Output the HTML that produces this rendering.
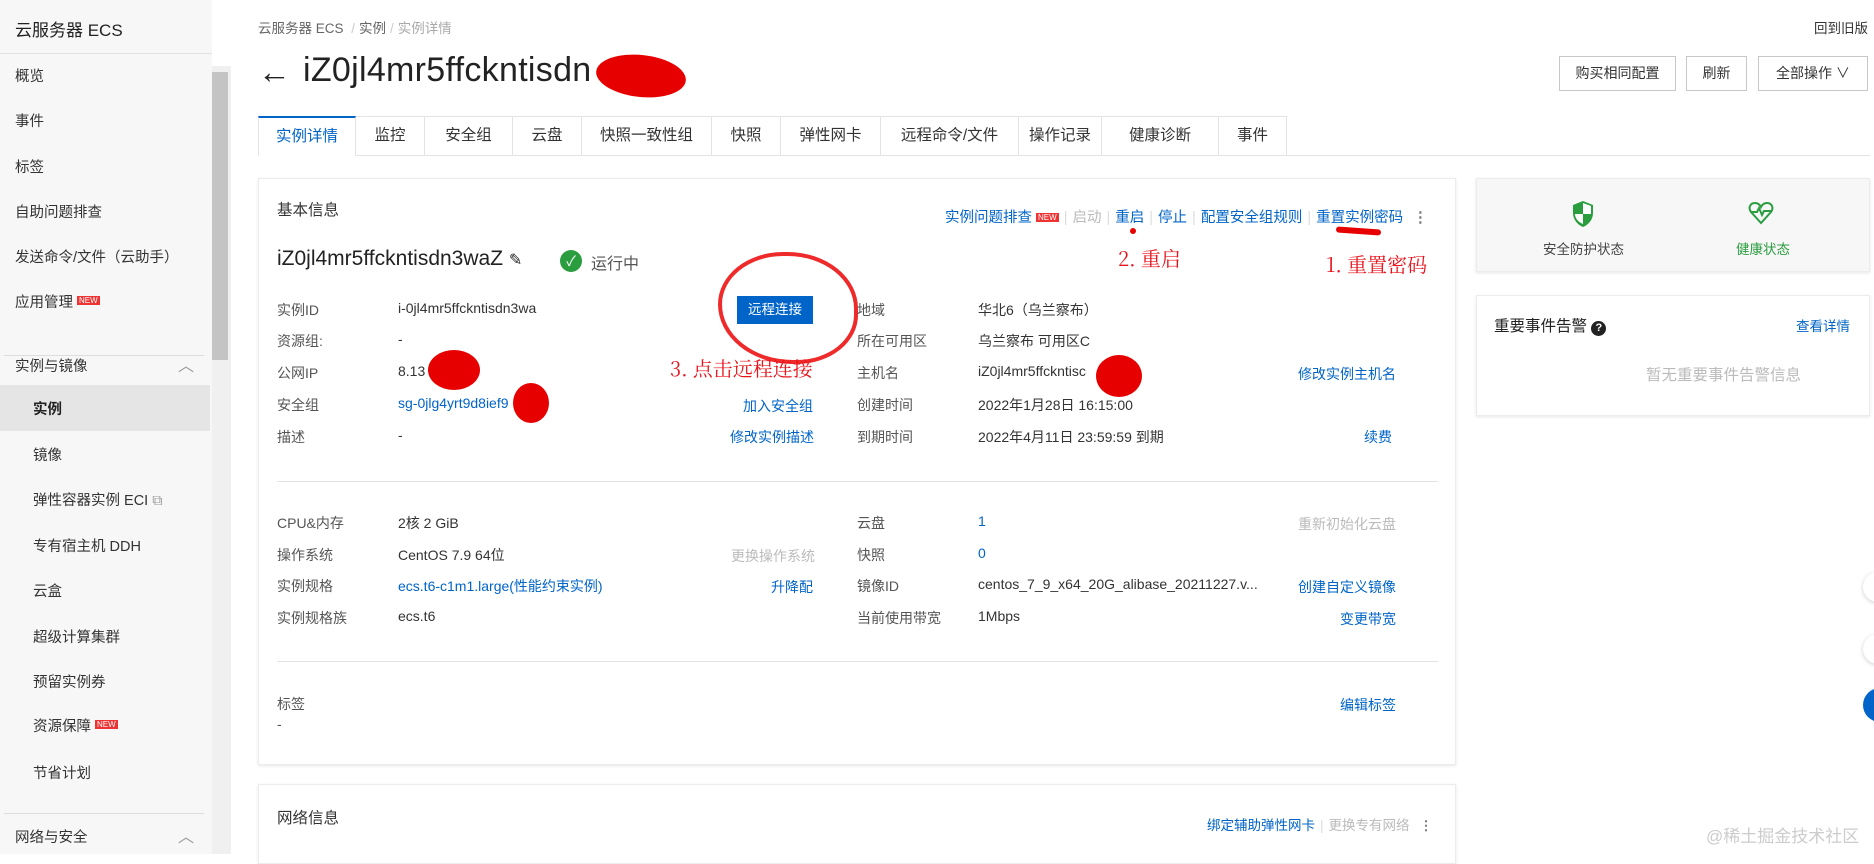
<!DOCTYPE html>
<html><head><meta charset="utf-8"><style>
*{margin:0;padding:0;box-sizing:border-box}
body{width:1874px;height:854px;overflow:hidden;background:#fff;font-family:"Liberation Sans","Noto Sans CJK SC",sans-serif;color:#333;font-size:14px;position:relative}
.a{position:absolute;white-space:nowrap}
.side{position:absolute;left:0;top:0;width:212px;height:854px;background:#f7f7f8}
.si{position:absolute;left:15px;font-size:14.5px;color:#333}
.blue{color:#0064c8}
.gray{color:#bbb}
.tab{position:absolute;top:116px;height:40px;border:1px solid #e3e3e3;border-left:none;font-size:15.5px;text-align:center;line-height:38px;background:#fff}
.card{position:absolute;background:#fff;border:1px solid #ececec;box-shadow:0 1px 3px rgba(0,0,0,.1)}
.lbl{position:absolute;left:277px;color:#555}
.red{color:#e8141c;font-family:"Noto Serif CJK SC","Liberation Serif",serif;font-size:20px}
.blob{position:absolute;background:#e60000;border-radius:50%}
.btn{position:absolute;top:56px;height:35px;border:1px solid #c8c8c8;font-size:14px;line-height:33px;text-align:center;background:#fff}
.sep{color:#ddd;margin:0 5px}
</style></head><body>
<div class="side"></div>
<div class="a" style="left:15px;top:16px;font-size:17px;color:#222">云服务器 ECS</div>
<div class="a" style="left:0;top:53px;width:212px;height:1px;background:#e2e2e2"></div>
<div class="a" style="left:212px;top:66px;width:19px;height:788px;background:#f0f0f0"></div>
<div class="a" style="left:212px;top:72px;width:16px;height:288px;background:#c4c4c4"></div>
<div class="si" style="top:65px">概览</div>
<div class="si" style="top:110px">事件</div>
<div class="si" style="top:156px">标签</div>
<div class="si" style="top:201px">自助问题排查</div>
<div class="si" style="top:246px">发送命令/文件（云助手）</div>
<div class="si" style="top:291px">应用管理 <span style="background:#e33;color:#fff;font-size:8px;padding:0 2px;vertical-align:4px">NEW</span></div>
<div class="a" style="left:4px;top:355px;width:200px;height:1px;background:#ddd"></div>
<div class="si" style="top:355px">实例与镜像</div><div class="a" style="left:178px;top:352px;font-size:16px;color:#999">︿</div>
<div class="a" style="left:0;top:385px;width:210px;height:46px;background:#e5e5e5"></div>
<div class="si" style="left:33px;top:398px;font-weight:bold;color:#222">实例</div>
<div class="si" style="left:33px;top:444px">镜像</div>
<div class="si" style="left:33px;top:489px">弹性容器实例 ECI <span style="color:#999">⧉</span></div>
<div class="si" style="left:33px;top:535px">专有宿主机 DDH</div>
<div class="si" style="left:33px;top:580px">云盒</div>
<div class="si" style="left:33px;top:626px">超级计算集群</div>
<div class="si" style="left:33px;top:671px">预留实例券</div>
<div class="si" style="left:33px;top:715px">资源保障 <span style="background:#e33;color:#fff;font-size:8px;padding:0 2px;vertical-align:4px">NEW</span></div>
<div class="si" style="left:33px;top:762px">节省计划</div>
<div class="a" style="left:4px;top:813px;width:200px;height:1px;background:#ddd"></div>
<div class="si" style="top:826px">网络与安全</div><div class="a" style="left:178px;top:823px;font-size:16px;color:#999">︿</div>

<div class="a" style="left:258px;top:17px;font-size:13.5px;color:#666">云服务器 ECS <span style="color:#ccc;margin:0 4px">/</span>实例<span style="color:#ccc;margin:0 4px">/</span><span style="color:#aaa">实例详情</span></div>
<div class="a" style="left:1814px;top:17px;font-size:13.5px;color:#333">回到旧版</div>
<div class="a" style="left:258px;top:53px;font-size:33px;color:#222">←</div>
<div class="a" style="left:303px;top:51px;font-size:34px;color:#222;letter-spacing:0.3px">iZ0jl4mr5ffckntisdn</div>
<div class="blob" style="left:596px;top:55px;width:90px;height:42px;transform:rotate(6deg)"></div>
<div class="btn" style="left:1559px;width:117px">购买相同配置</div>
<div class="btn" style="left:1686px;width:61px">刷新</div>
<div class="btn" style="left:1758px;width:110px">全部操作 ∨</div>

<div class="a" style="left:258px;top:155px;width:1612px;height:1px;background:#e3e3e3"></div>
<div class="tab" style="left:258px;width:98px;border-left:1px solid #e3e3e3;border-top:2px solid #0064c8;color:#0064c8;border-bottom-color:#fff">实例详情</div>
<div class="tab" style="left:356px;width:69px">监控</div>
<div class="tab" style="left:425px;width:88px">安全组</div>
<div class="tab" style="left:513px;width:69px">云盘</div>
<div class="tab" style="left:582px;width:130px">快照一致性组</div>
<div class="tab" style="left:712px;width:69px">快照</div>
<div class="tab" style="left:781px;width:100px">弹性网卡</div>
<div class="tab" style="left:881px;width:138px">远程命令/文件</div>
<div class="tab" style="left:1019px;width:83px">操作记录</div>
<div class="tab" style="left:1102px;width:117px">健康诊断</div>
<div class="tab" style="left:1219px;width:68px">事件</div>

<div class="card" style="left:258px;top:178px;width:1198px;height:587px"></div>
<div class="card" style="left:258px;top:784px;width:1198px;height:80px"></div>
<div class="card" style="left:1476px;top:178px;width:394px;height:94px;background:#f7f7f7"></div>
<div class="card" style="left:1476px;top:295px;width:394px;height:121px"></div>

<div class="a" style="left:277px;top:198px;font-size:15.5px;color:#333">基本信息</div>
<div class="a" style="left:945px;top:206px;font-size:14.5px"><span class="blue">实例问题排查</span> <span style="background:#e33;color:#fff;font-size:8px;padding:0 2px;vertical-align:2px">NEW</span><span class="sep">|</span><span class="gray">启动</span><span class="sep">|</span><span class="blue">重启</span><span class="sep">|</span><span class="blue">停止</span><span class="sep">|</span><span class="blue">配置安全组规则</span><span class="sep">|</span><span class="blue">重置实例密码</span> <span style="color:#777;font-weight:bold;margin-left:6px">⋮</span></div>
<div class="a" style="left:1336px;top:228px;width:45px;height:6px;background:#e60000;border-radius:3px;transform:rotate(4deg)"></div>
<div class="blob" style="left:1130px;top:228px;width:6px;height:6px"></div>
<div class="a red" style="left:1118px;top:243px">2. 重启</div>
<div class="a red" style="left:1326px;top:249px">1. 重置密码</div>

<div class="a" style="left:277px;top:247px;font-size:21px;color:#222">iZ0jl4mr5ffckntisdn3waZ <span style="font-size:16px">✎</span></div>
<div class="a" style="left:560px;top:250px;width:22px;height:22px;border-radius:50%;background:#2a9d3f;color:#fff;font-size:14px;text-align:center;line-height:22px">✓</div>
<div class="a" style="left:591px;top:250px;font-size:16px;color:#555">运行中</div>

<div class="a" style="left:718px;top:252px;width:140px;height:112px;border:4px solid #ee2a2a;border-radius:48% 52% 45% 55%"></div>
<div class="a" style="left:737px;top:296px;width:76px;height:28px;background:#0064c8;color:#fff;font-size:13.5px;line-height:28px;text-align:center">远程连接</div>
<div class="a red" style="left:670px;top:353px">3. 点击远程连接</div>

<div class="lbl a" style="top:300px">实例ID</div><div class="a" style="left:398px;top:300px">i-0jl4mr5ffckntisdn3wa</div>
<div class="lbl a" style="top:331px">资源组:</div><div class="a" style="left:398px;top:331px">-</div>
<div class="lbl a" style="top:363px">公网IP</div><div class="a" style="left:398px;top:363px">8.13</div>
<div class="blob" style="left:428px;top:350px;width:52px;height:40px"></div>
<div class="lbl a" style="top:395px">安全组</div><div class="a blue" style="left:398px;top:395px">sg-0jlg4yrt9d8ief9</div>
<div class="blob" style="left:513px;top:383px;width:36px;height:40px"></div>
<div class="a blue" style="left:743px;top:396px">加入安全组</div>
<div class="lbl a" style="top:427px">描述</div><div class="a" style="left:398px;top:427px">-</div>
<div class="a blue" style="left:730px;top:427px">修改实例描述</div>

<div class="a" style="left:857px;top:300px;color:#555">地域</div><div class="a" style="left:978px;top:300px">华北6（乌兰察布）</div>
<div class="a" style="left:857px;top:331px;color:#555">所在可用区</div><div class="a" style="left:978px;top:331px">乌兰察布 可用区C</div>
<div class="a" style="left:857px;top:363px;color:#555">主机名</div><div class="a" style="left:978px;top:363px">iZ0jl4mr5ffckntisc</div>
<div class="blob" style="left:1096px;top:355px;width:46px;height:42px"></div>
<div class="a blue" style="left:1298px;top:364px">修改实例主机名</div>
<div class="a" style="left:857px;top:395px;color:#555">创建时间</div><div class="a" style="left:978px;top:395px">2022年1月28日 16:15:00</div>
<div class="a" style="left:857px;top:427px;color:#555">到期时间</div><div class="a" style="left:978px;top:427px">2022年4月11日 23:59:59 到期</div>
<div class="a blue" style="left:1364px;top:427px">续费</div>

<div class="a" style="left:277px;top:481px;width:1161px;height:1px;background:#e3e3e3"></div>
<div class="lbl a" style="top:513px">CPU&amp;内存</div><div class="a" style="left:398px;top:513px">2核 2 GiB</div>
<div class="lbl a" style="top:545px">操作系统</div><div class="a" style="left:398px;top:545px">CentOS 7.9 64位</div><div class="a gray" style="left:731px;top:546px">更换操作系统</div>
<div class="lbl a" style="top:576px">实例规格</div><div class="a blue" style="left:398px;top:576px">ecs.t6-c1m1.large(性能约束实例)</div><div class="a blue" style="left:771px;top:577px">升降配</div>
<div class="lbl a" style="top:608px">实例规格族</div><div class="a" style="left:398px;top:608px">ecs.t6</div>
<div class="a" style="left:857px;top:513px;color:#555">云盘</div><div class="a blue" style="left:978px;top:513px">1</div><div class="a gray" style="left:1298px;top:514px">重新初始化云盘</div>
<div class="a" style="left:857px;top:545px;color:#555">快照</div><div class="a blue" style="left:978px;top:545px">0</div>
<div class="a" style="left:857px;top:576px;color:#555">镜像ID</div><div class="a" style="left:978px;top:576px">centos_7_9_x64_20G_alibase_20211227.v...</div><div class="a blue" style="left:1298px;top:577px">创建自定义镜像</div>
<div class="a" style="left:857px;top:608px;color:#555">当前使用带宽</div><div class="a" style="left:978px;top:608px">1Mbps</div><div class="a blue" style="left:1340px;top:609px">变更带宽</div>
<div class="a" style="left:277px;top:661px;width:1161px;height:1px;background:#e3e3e3"></div>
<div class="lbl a" style="top:694px">标签</div><div class="a blue" style="left:1340px;top:695px">编辑标签</div>
<div class="lbl a" style="top:716px">-</div>

<div class="a" style="left:277px;top:806px;font-size:15.5px">网络信息</div>
<div class="a" style="left:1207px;top:814px;font-size:13.5px"><span class="blue">绑定辅助弹性网卡</span><span class="sep">|</span><span class="gray">更换专有网络</span> <span style="color:#777;font-weight:bold;margin-left:6px">⋮</span></div>
<div class="a" style="left:1706px;top:822px;font-size:17px;color:#ccc">@稀土掘金技术社区</div>

<svg class="a" style="left:1571px;top:200px" width="24" height="28" viewBox="0 0 24 28"><path d="M12 1 L22 5 V13 C22 20 17 25 12 27 C7 25 2 20 2 13 V5 Z" fill="#2a9d3f"/><path d="M12 4 V14 H20 V6 L12 3 Z M12 14 V24 C7 22 4 18 4 14 Z" fill="#fff"/></svg>
<div class="a" style="left:1543px;top:238px;font-size:13.5px;color:#444">安全防护状态</div>
<svg class="a" style="left:1748px;top:200px" width="26" height="26" viewBox="0 0 26 26"><path d="M13 23 L3 12 C0 8 2 3 7 3 C10 3 12 5 13 7 C14 5 16 3 19 3 C24 3 26 8 23 12 Z" fill="none" stroke="#2a9d3f" stroke-width="2"/><path d="M3 12 H9 L11 8 L14 15 L16 11 H23" fill="none" stroke="#2a9d3f" stroke-width="2"/></svg>
<div class="a" style="left:1736px;top:238px;font-size:13.5px;color:#2a9d3f">健康状态</div>
<div class="a" style="left:1494px;top:314px;font-size:15.5px;color:#222">重要事件告警 <span style="display:inline-block;width:15px;height:15px;border-radius:50%;background:#222;color:#fff;font-size:11px;text-align:center;line-height:15px;font-weight:bold">?</span></div>
<div class="a blue" style="left:1796px;top:315px;font-size:13.5px">查看详情</div>
<div class="a" style="left:1646px;top:363px;font-size:15.5px;color:#bbb">暂无重要事件告警信息</div>

<div class="a" style="left:1863px;top:572px;width:30px;height:30px;border-radius:50%;background:#fff;box-shadow:0 1px 4px rgba(0,0,0,.2)"></div>
<div class="a" style="left:1863px;top:634px;width:30px;height:30px;border-radius:50%;background:#fff;box-shadow:0 1px 4px rgba(0,0,0,.2)"></div>
<div class="a" style="left:1863px;top:688px;width:34px;height:34px;border-radius:50%;background:#0064c8"></div>
</body></html>
